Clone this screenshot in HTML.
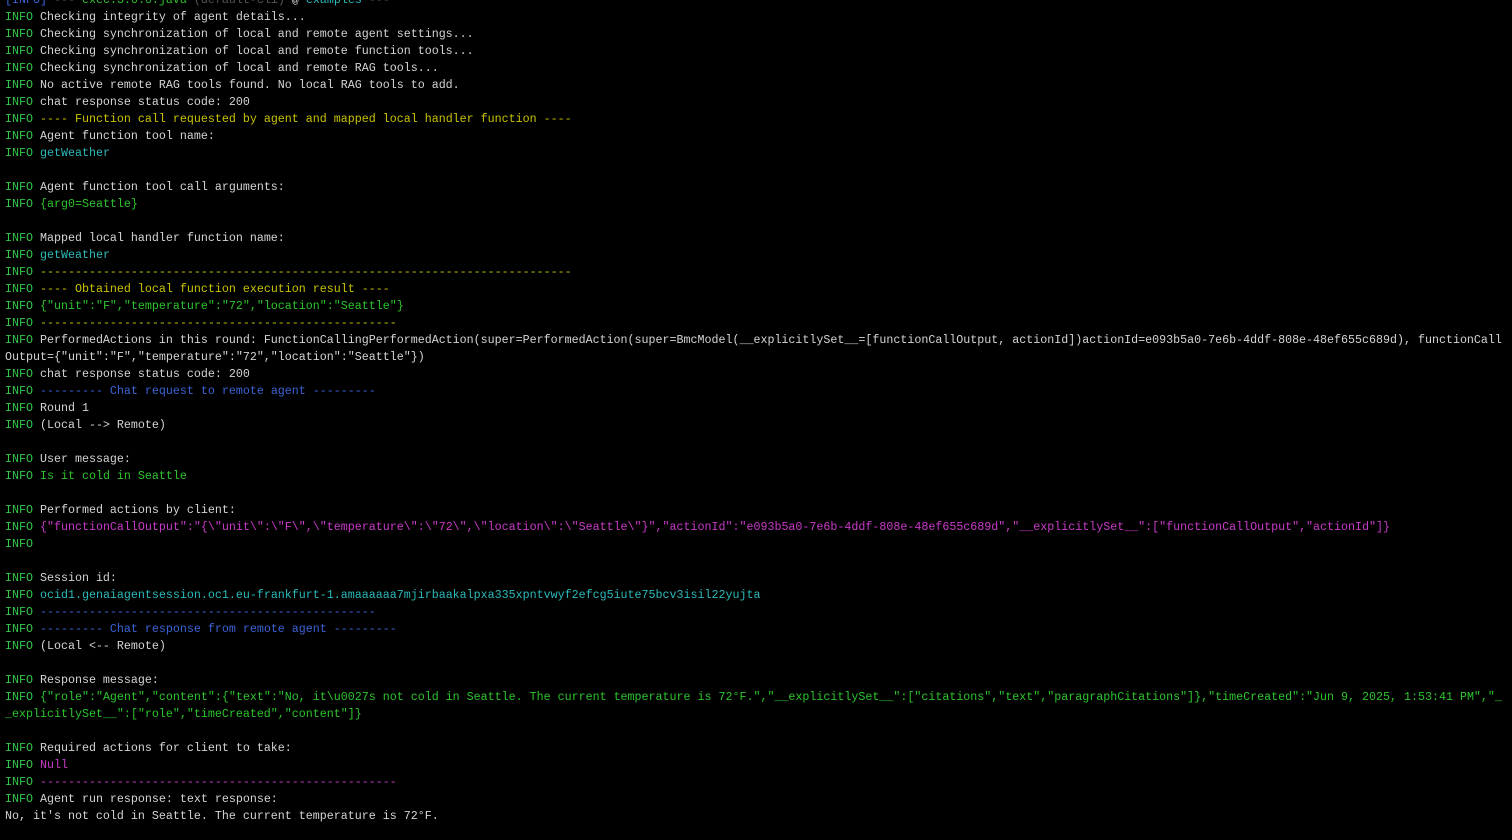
<!DOCTYPE html>
<html><head><meta charset="utf-8"><style>
html,body{margin:0;padding:0;background:#000;width:1512px;height:840px;overflow:hidden}
pre{margin:0;position:absolute;left:5px;top:-8px;font-family:"Liberation Mono",monospace;font-size:11.67px;line-height:17px;color:#d4d4d4;white-space:pre}
.i{color:#33c84c}.y{color:#c8c300}.c{color:#2cb9b9}.b{color:#3b63d6}.m{color:#c93ac9}.g{color:#2dc42d}.d{color:#555}
</style></head><body><pre><span class="b">[INFO]</span> <span class="d">---</span> <span class="g">exec:3.0.0:java</span> <span class="d">(default-cli)</span> @ <span class="c">examples</span> <span class="d">---</span>
<span class="i">INFO</span> Checking integrity of agent details...
<span class="i">INFO</span> Checking synchronization of local and remote agent settings...
<span class="i">INFO</span> Checking synchronization of local and remote function tools...
<span class="i">INFO</span> Checking synchronization of local and remote RAG tools...
<span class="i">INFO</span> No active remote RAG tools found. No local RAG tools to add.
<span class="i">INFO</span> chat response status code: 200
<span class="i">INFO</span> <span class="y">---- Function call requested by agent and mapped local handler function ----</span>
<span class="i">INFO</span> Agent function tool name:
<span class="i">INFO</span> <span class="c">getWeather</span>

<span class="i">INFO</span> Agent function tool call arguments:
<span class="i">INFO</span> <span class="g">{arg0=Seattle}</span>

<span class="i">INFO</span> Mapped local handler function name:
<span class="i">INFO</span> <span class="c">getWeather</span>
<span class="i">INFO</span> <span class="y">----------------------------------------------------------------------------</span>
<span class="i">INFO</span> <span class="y">---- Obtained local function execution result ----</span>
<span class="i">INFO</span> <span class="g">{"unit":"F","temperature":"72","location":"Seattle"}</span>
<span class="i">INFO</span> <span class="y">---------------------------------------------------</span>
<span class="i">INFO</span> PerformedActions in this round: FunctionCallingPerformedAction(super=PerformedAction(super=BmcModel(__explicitlySet__=[functionCallOutput, actionId])actionId=e093b5a0-7e6b-4ddf-808e-48ef655c689d), functionCall
Output={"unit":"F","temperature":"72","location":"Seattle"})
<span class="i">INFO</span> chat response status code: 200
<span class="i">INFO</span> <span class="b">--------- Chat request to remote agent ---------</span>
<span class="i">INFO</span> Round 1
<span class="i">INFO</span> (Local --> Remote)

<span class="i">INFO</span> User message:
<span class="i">INFO</span> <span class="g">Is it cold in Seattle</span>

<span class="i">INFO</span> Performed actions by client:
<span class="i">INFO</span> <span class="m">{"functionCallOutput":"{\"unit\":\"F\",\"temperature\":\"72\",\"location\":\"Seattle\"}","actionId":"e093b5a0-7e6b-4ddf-808e-48ef655c689d","__explicitlySet__":["functionCallOutput","actionId"]}</span>
<span class="i">INFO</span>

<span class="i">INFO</span> Session id:
<span class="i">INFO</span> <span class="c">ocid1.genaiagentsession.oc1.eu-frankfurt-1.amaaaaaa7mjirbaakalpxa335xpntvwyf2efcg5iute75bcv3isil22yujta</span>
<span class="i">INFO</span> <span class="b">------------------------------------------------</span>
<span class="i">INFO</span> <span class="b">--------- Chat response from remote agent ---------</span>
<span class="i">INFO</span> (Local &lt;-- Remote)

<span class="i">INFO</span> Response message:
<span class="i">INFO</span> <span class="g">{"role":"Agent","content":{"text":"No, it\u0027s not cold in Seattle. The current temperature is 72°F.","__explicitlySet__":["citations","text","paragraphCitations"]},"timeCreated":"Jun 9, 2025, 1:53:41 PM","_</span>
<span class="g">_explicitlySet__":["role","timeCreated","content"]}</span>

<span class="i">INFO</span> Required actions for client to take:
<span class="i">INFO</span> <span class="m">Null</span>
<span class="i">INFO</span> <span class="m">---------------------------------------------------</span>
<span class="i">INFO</span> Agent run response: text response:
No, it's not cold in Seattle. The current temperature is 72°F.
</pre></body></html>
